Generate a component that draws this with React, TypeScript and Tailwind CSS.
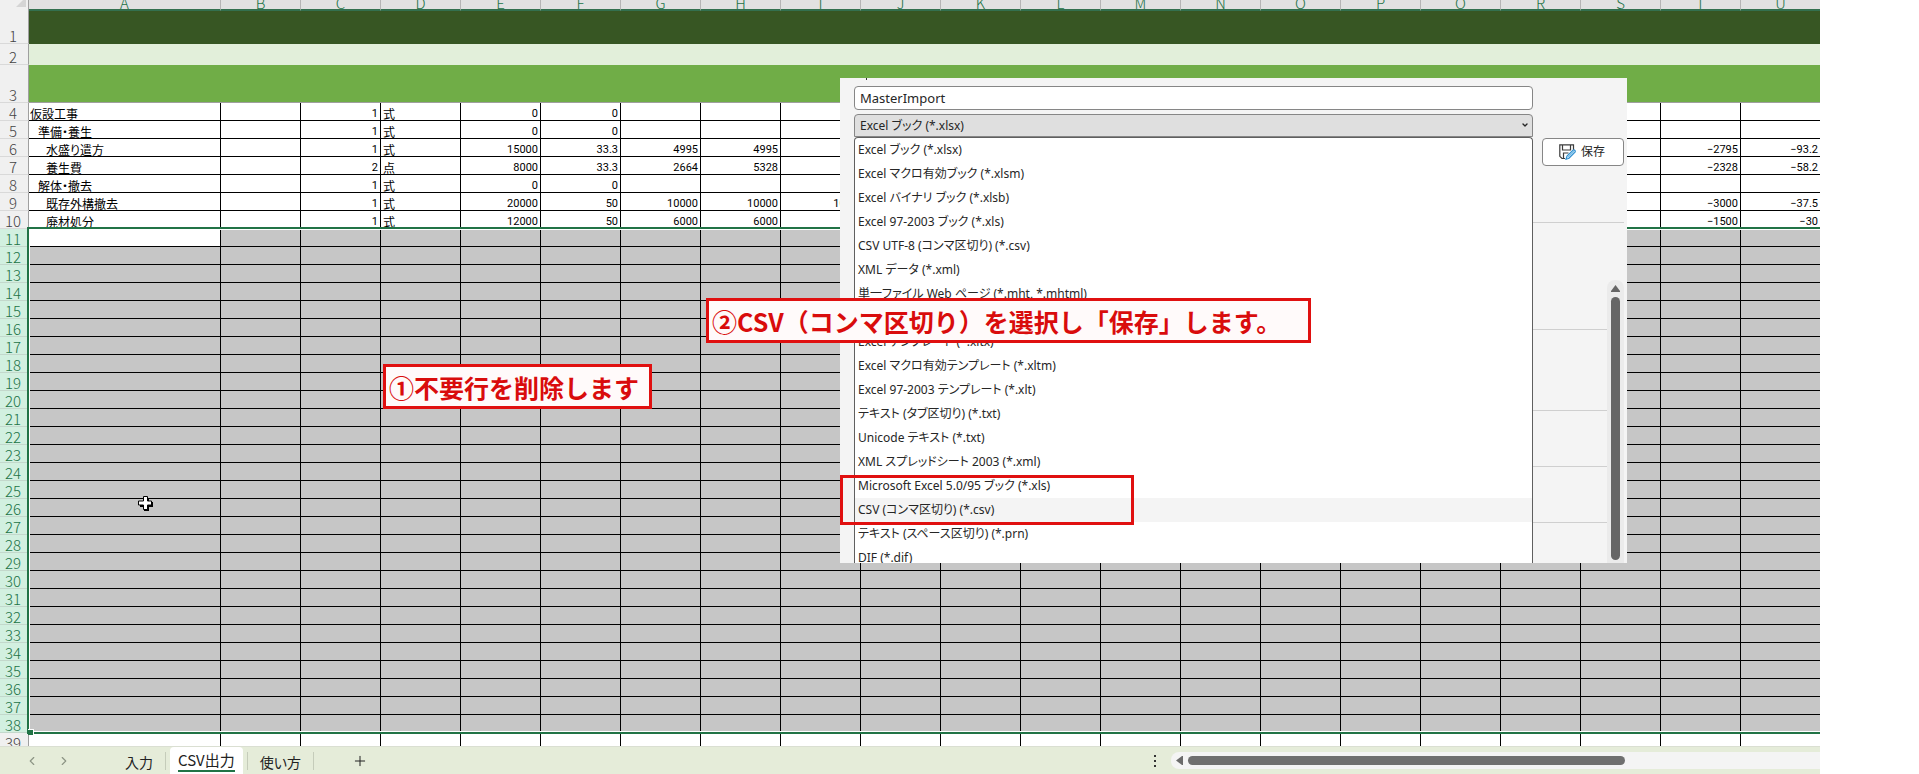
import { ChevronDown, ChevronLeft, ChevronRight, Plus } from "lucide-react";

const columns = "ABCDEFGHIJKLMNOPQRSTU".split("");

type Row = {
  no: number;
  indent?: string;
  cells: Record<string, string>;
};

const rows: Row[] = [
  { no: 4, indent: "pl-px", cells: { A: "仮設工事", C: "1", D: "式", E: "0", F: "0" } },
  { no: 5, indent: "pl-[9px]", cells: { A: "準備・養生", C: "1", D: "式", E: "0", F: "0" } },
  {
    no: 6,
    indent: "pl-[17px]",
    cells: { A: "水盛り遣方", C: "1", D: "式", E: "15000", F: "33.3", G: "4995", H: "4995", T: "−2795", U: "−93.2" },
  },
  {
    no: 7,
    indent: "pl-[17px]",
    cells: { A: "養生費", C: "2", D: "点", E: "8000", F: "33.3", G: "2664", H: "5328", T: "−2328", U: "−58.2" },
  },
  { no: 8, indent: "pl-[9px]", cells: { A: "解体・撤去", C: "1", D: "式", E: "0", F: "0" } },
  {
    no: 9,
    indent: "pl-[17px]",
    cells: { A: "既存外構撤去", C: "1", D: "式", E: "20000", F: "50", G: "10000", H: "10000", I: "1000", T: "−3000", U: "−37.5" },
  },
  {
    no: 10,
    indent: "pl-[17px]",
    cells: { A: "廃材処分", C: "1", D: "式", E: "12000", F: "50", G: "6000", H: "6000", T: "−1500", U: "−30" },
  },
];

const selectedRows = Array.from({ length: 28 }, (_, i) => i + 11);

const fileTypes = [
  "Excel ブック (*.xlsx)",
  "Excel マクロ有効ブック (*.xlsm)",
  "Excel バイナリ ブック (*.xlsb)",
  "Excel 97-2003 ブック (*.xls)",
  "CSV UTF-8 (コンマ区切り) (*.csv)",
  "XML データ (*.xml)",
  "単一ファイル Web ページ (*.mht, *.mhtml)",
  "Web ページ (*.htm, *.html)",
  "Excel テンプレート (*.xltx)",
  "Excel マクロ有効テンプレート (*.xltm)",
  "Excel 97-2003 テンプレート (*.xlt)",
  "テキスト (タブ区切り) (*.txt)",
  "Unicode テキスト (*.txt)",
  "XML スプレッドシート 2003 (*.xml)",
  "Microsoft Excel 5.0/95 ブック (*.xls)",
  "CSV (コンマ区切り) (*.csv)",
  "テキスト (スペース区切り) (*.prn)",
  "DIF (*.dif)",
];

const rowHead =
  "border-r border-b border-r-[#9f9f9f] border-b-[#d9d9d9] bg-[#f0f0f0] p-0 pr-[2px] align-bottom text-center text-[15px] leading-[14px] font-light text-[#444]";
const selectedHead =
  "border-r border-b border-r-[#9f9f9f] border-b-[#c3d8cc] bg-[#d2f0e0] p-0 pr-[2px] align-bottom text-center text-[15px] leading-[14px] font-light text-[#217346]";

function DataRow({ row }: { row: Row }) {
  return (
    <tr className="h-[18px]">
      <th scope="row" className={rowHead}>{row.no}</th>
      {columns.map((c) => {
        const value = row.cells[c] ?? "";
        if (c === "A" || c === "D") {
          return (
            <td
              key={c}
              className={`border-r border-b border-black p-0 align-bottom text-xs leading-[13px] whitespace-nowrap ${c === "A" ? row.indent : "pl-[2px]"}`}
            >
              {value}
            </td>
          );
        }
        return (
          <td
            key={c}
            className="border-r border-b border-black p-0 pr-[2px] text-right align-bottom font-['Roboto',sans-serif] text-[11px] leading-3 last:border-r-0"
          >
            {value}
          </td>
        );
      })}
    </tr>
  );
}

function Sheet() {
  return (
    <div className="relative">
      <table className="w-full table-fixed border-separate border-spacing-0">
        <colgroup>
          <col className="w-[29px]" />
          <col className="w-[192px]" />
          {columns.slice(1, -1).map((c) => (
            <col key={c} className="w-20" />
          ))}
          <col />
        </colgroup>
        <thead>
          <tr className="h-[11px]">
            <td className="border-r border-[#9f9f9f] bg-[#f0f0f0] p-0">
              <svg className="ml-4 block h-[11px] w-[10px]" viewBox="0 0 10 11">
                <path d="M10 0V7H0L7 0Z" fill="#d5d5d5" />
              </svg>
            </td>
            {columns.map((c) => (
              <th
                key={c}
                scope="col"
                className="border-r border-b-2 border-r-[#b5b5b5] border-b-[#33704f] bg-[#e1e1e1] p-0 font-light text-[#217346] last:border-r-0"
              >
                <div className="flex h-[9px] items-end justify-center overflow-hidden text-[15px] leading-3">{c}</div>
              </th>
            ))}
          </tr>
        </thead>
        <tbody>
          <tr className="h-[33px]">
            <th scope="row" className={rowHead}>1</th>
            <td colSpan={21} className="bg-[#375623] p-0" />
          </tr>
          <tr className="h-[21px]">
            <th scope="row" className={rowHead}>2</th>
            <td colSpan={21} className="bg-[#e2efda] p-0" />
          </tr>
          <tr className="h-[38px]">
            <th scope="row" className={`${rowHead} border-b-[#9f9f9f]`}>3</th>
            <td colSpan={21} className="border-b border-[#9f9f9f] bg-[#70ad47] p-0" />
          </tr>
          {rows.map((row) => (
            <DataRow key={row.no} row={row} />
          ))}
          {selectedRows.map((no) => (
            <tr key={no} className="h-[18px]">
              <th scope="row" className={selectedHead}>{no}</th>
              {columns.map((c) => (
                <td
                  key={c}
                  className={`border-r border-b border-black p-0 last:border-r-0 ${no === 11 && c === "A" ? "bg-white" : "bg-[#c6c6c6]"}`}
                />
              ))}
            </tr>
          ))}
          <tr className="h-[13px]">
            <th scope="row" className="border-r border-[#9f9f9f] bg-[#f0f0f0] p-0 pr-[2px] font-light text-[#444]">
              <div className="h-[13px] overflow-hidden text-[15px] leading-5">39</div>
            </th>
            {columns.map((c) => (
              <td key={c} className="border-r border-black p-0 last:border-r-0" />
            ))}
          </tr>
        </tbody>
      </table>

      {/* selection frame */}
      <div className="pointer-events-none absolute top-[227px] right-0 bottom-3 left-[27px] border-y-2 border-l-2 border-[#217346]">
        <div className="h-full border-y border-l border-white" />
        <div className="absolute -bottom-[3px] -left-px size-[6px] border-t border-r border-white bg-[#217346]" />
      </div>

      {/* cell cursor */}
      <svg className="absolute top-[496px] left-[138px] size-4" viewBox="0 0 16 16">
        <path d="M6 2h5v4h4v5h-4v4H6v-4H2V6h4z" fill="#000" />
        <path d="M5.500 .5h4v4.500h4v4h-4v4.500h-4v-4.500H.5V5h5z" fill="#fff" stroke="#000" />
      </svg>
    </div>
  );
}

function SaveIcon() {
  return (
    <svg className="h-4 w-[17px]" viewBox="0 0 17 16" fill="none">
      <path d="M6 14.500H3L.8 12.300V.8H14.500V6M3.500 .8V6H11.500V.8M4.500 14.500V9H9.500" stroke="#3b3b3b" strokeWidth="1.200" />
      <path d="M7 15.200L8 12L14 6.200Q15.200 5.600 16 6.600Q16.600 7.600 15.800 8.400L10 14.200Z" fill="#fff" stroke="#2f8fd0" strokeWidth="1.200" />
      <path d="M8.500 13.500L15 7.300" stroke="#7cc0ea" strokeWidth="1.500" />
    </svg>
  );
}

function SaveDialog() {
  return (
    <section className="absolute top-[78px] left-[840px] flex h-[485px] w-[787px] overflow-hidden bg-[#f4f4f4] pl-[14px] font-['Noto_Sans','Noto_Sans_CJK_JP',sans-serif] text-xs text-[#262626] [font-feature-settings:'palt']">
      <div className="absolute top-0 left-[26px] h-[2px] w-px bg-[#333]" />
      <div className="flex w-[679px] flex-col">
        <input
          aria-label="ファイル名"
          defaultValue="MasterImport"
          className="mt-2 h-6 shrink-0 rounded-[4px] border border-[#868686] bg-white px-[5px] text-[13px]"
        />
        <div className="relative mt-1 h-[23px] shrink-0">
          <select
            aria-label="ファイルの種類"
            className="block h-full w-full appearance-none rounded-t-[4px] border border-[#868686] bg-[#dfdfdf] px-[5px]"
          >
            {fileTypes.map((t) => (
              <option key={t}>{t}</option>
            ))}
          </select>
          <ChevronDown className="pointer-events-none absolute top-[7px] right-1 size-2" strokeWidth={4} />
        </div>
        <ul role="listbox" aria-label="ファイルの種類の一覧" className="rounded-t-[4px] border-x border-t border-[#5f5f5f] bg-white">
          {fileTypes.map((t, i) => (
            <li
              key={t}
              role="option"
              aria-selected={i === 15}
              className={`h-6 pl-[3px] leading-6 whitespace-nowrap ${i === 15 ? "bg-[#f4f4f4]" : ""}`}
            >
              {t}
            </li>
          ))}
        </ul>
      </div>
      <div className="flex flex-1 flex-col pr-[3px]">
        <button className="mt-[60px] ml-[9px] flex h-7 shrink-0 items-center gap-[5px] rounded-[4px] border border-[#868686] bg-white pl-4">
          <SaveIcon />
          保存
        </button>
        <div className="mt-14 h-px shrink-0 bg-[#cfcfcf]" />
        <div className="mt-[57px] flex flex-1">
          <div className="flex-1">
            <div className="h-[50px] border-b border-[#cfcfcf]" />
            <div className="h-[81px] border-b border-[#cfcfcf]" />
            <div className="h-14 border-b border-[#cfcfcf]" />
            <div className="h-14 border-b border-[#cfcfcf]" />
          </div>
          <div className="flex w-[17px] flex-col items-center rounded-t-lg bg-[#ebebeb]">
            <svg className="mt-[5px] h-[7px] w-[9px]" viewBox="0 0 9 7">
              <path d="M4.500 0L9 6V7H0V6Z" fill="#666" />
            </svg>
            <div className="mt-[5px] mb-[3px] w-[9px] flex-1 rounded-full bg-[#666]" />
          </div>
        </div>
      </div>
    </section>
  );
}

function SheetTabs() {
  return (
    <footer className="flex h-7 items-center border-t border-[#dadfd2] bg-[#e5ecd9] text-sm text-[#222]">
      <button aria-label="前へ" className="ml-[25px]">
        <ChevronLeft className="size-[14px] text-[#8c9484]" />
      </button>
      <button aria-label="次へ" className="ml-[18px]">
        <ChevronRight className="size-[14px] text-[#8c9484]" />
      </button>
      <button className="ml-[54px] pt-[3px]">入力</button>
      <div className="ml-3 h-[18px] w-px bg-[#c5ccba]" />
      <button className="ml-1 h-full rounded-t bg-white px-2 text-[15px]">
        <span className="block h-[23px] border-b-2 border-[#217346] leading-[21px]">CSV出力</span>
      </button>
      <div className="ml-1 h-[18px] w-px bg-[#c5ccba]" />
      <button className="ml-3 pt-[3px]">使い方</button>
      <div className="ml-3 h-[18px] w-px bg-[#c5ccba]" />
      <button aria-label="シートを追加" className="ml-[38px]">
        <Plus className="size-4" strokeWidth={1.5} />
      </button>
      <div className="ml-auto flex flex-col gap-[3px]">
        <span className="size-[2px] bg-[#333]" />
        <span className="size-[2px] bg-[#333]" />
        <span className="size-[2px] bg-[#333]" />
      </div>
      <div className="ml-[15px] flex h-[17px] w-[649px] items-center rounded-l-lg bg-[#f4f4f4] pl-[5px]">
        <svg className="h-[9px] w-[7px]" viewBox="0 0 7 9">
          <path d="M0 4.500L6 0H7V9H6Z" fill="#6b6b6b" />
        </svg>
        <div className="ml-[5px] h-[9px] w-[437px] rounded-full bg-[#6f6f6f]" />
      </div>
    </footer>
  );
}

export default function App() {
  return (
    <div className="min-h-screen bg-white font-['Noto_Sans_CJK_JP',sans-serif] text-black">
      <main className="relative mr-[99px] overflow-hidden [font-feature-settings:'palt']">
        <Sheet />
        <SheetTabs />
        <SaveDialog />

        {/* numbered notes */}
        <div className="absolute top-[364px] left-[383px] h-[45px] w-[269px] border-3 border-[#e01010] bg-[#fffafa] pl-[3px] text-[25px] leading-10 font-bold whitespace-nowrap text-[#d90c0c] [font-feature-settings:normal]">
          ①不要行を削除します
        </div>
        <div className="absolute top-[298px] left-[706px] h-[45px] w-[605px] border-3 border-[#e01010] bg-[#fffafa] pl-[3px] text-[25px] leading-10 font-bold whitespace-nowrap text-[#d90c0c] [font-feature-settings:normal]">
          ②CSV（コンマ区切り）を選択し「保存」します。
        </div>
        <div className="absolute top-[475px] left-[840px] h-[50px] w-[294px] border-3 border-[#e01010]" />
      </main>
    </div>
  );
}
